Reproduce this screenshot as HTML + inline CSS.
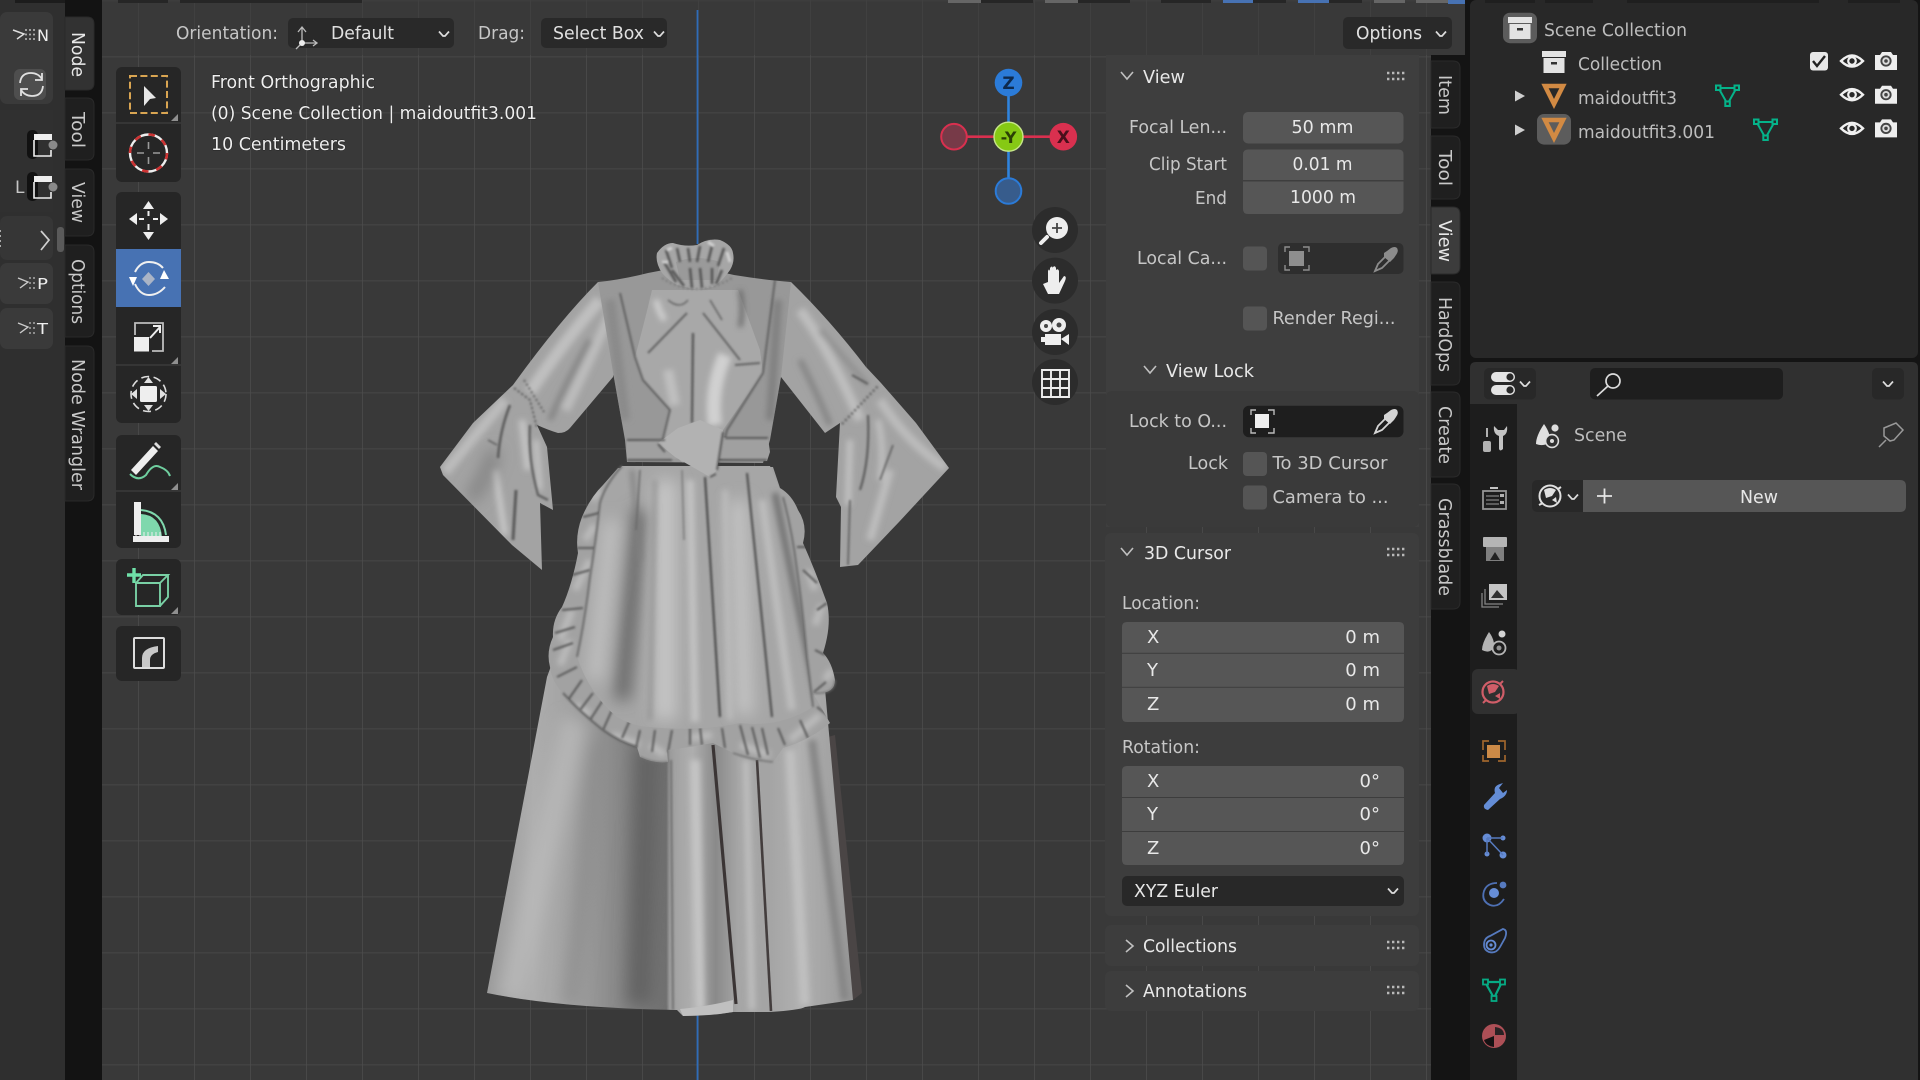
<!DOCTYPE html>
<html><head><meta charset="utf-8"><title>Blender</title>
<style>html,body{margin:0;padding:0;background:#141414;width:1920px;height:1080px;overflow:hidden}
svg{display:block;filter:blur(.35px)}
text{font-family:"DejaVu Sans","Liberation Sans",sans-serif;font-size:18px;fill:#c8c8c8}
.w{fill:#e8e8e8}.l{fill:#c6c6c6}.v{fill:#e0e0e0}.t{fill:#c9c9c9}.o{fill:#bdbdbd}.a{fill:#efefef}
</style></head><body>
<svg xmlns="http://www.w3.org/2000/svg" width="1920" height="1080" viewBox="0 0 1920 1080">
<defs>
<pattern id="grid" x="138" y="56.5" width="56" height="56" patternUnits="userSpaceOnUse"><path d="M0 0V56M0 0H56" stroke="#4c4c4c" stroke-width="1.6" fill="none"/></pattern>
<filter id="b1" filterUnits="userSpaceOnUse" x="420" y="220" width="560" height="810"><feGaussianBlur stdDeviation="1"/></filter>
<filter id="b3" filterUnits="userSpaceOnUse" x="420" y="220" width="560" height="810"><feGaussianBlur stdDeviation="3"/></filter>
<filter id="b6" filterUnits="userSpaceOnUse" x="420" y="220" width="560" height="810"><feGaussianBlur stdDeviation="8"/></filter>
<linearGradient id="sk" gradientUnits="userSpaceOnUse" x1="480" y1="0" x2="860" y2="0">
<stop offset="0" stop-color="#979797"/><stop offset=".14" stop-color="#adadad"/><stop offset=".24" stop-color="#a2a2a2"/><stop offset=".4" stop-color="#808080"/><stop offset=".49" stop-color="#707070"/><stop offset=".5" stop-color="#a0a0a0"/><stop offset=".56" stop-color="#aeaeae"/><stop offset=".62" stop-color="#8a8a8a"/><stop offset=".68" stop-color="#a6a6a6"/><stop offset=".76" stop-color="#a4a4a4"/><stop offset=".84" stop-color="#b0b0b0"/><stop offset=".94" stop-color="#a0a0a0"/><stop offset="1" stop-color="#8f8f8f"/></linearGradient>
<clipPath id="cS"><path d="M590 560L547 677L487 993Q560 1008 677 1010L683 1016Q710 1016 733 1012L770 1012Q800 1010 805 1007L853 1000L817 600Z"/></clipPath>
<clipPath id="cA"><path d="M622 466Q605 485 600 503Q596 540 590 577Q585 620 577 657Q590 695 617 717Q635 727 650 727Q700 732 740 723Q780 728 813 707Q810 680 807 657Q803 610 797 570Q792 530 783 497L770 466Z"/></clipPath>
<clipPath id="cU"><path d="M618 468L603 485Q590 498 582 517Q575 535 578 553Q572 585 562 607Q552 620 553 637Q546 652 550 667Q552 682 563 693Q580 712 603 730Q620 742 637 747L640 757Q655 764 668 762L667 750L690 747L713 743L733 753Q752 760 773 762L783 748Q810 740 830 723L813 693Q835 695 835 680Q832 662 823 653Q832 625 827 603Q815 570 803 543Q808 525 798 510Q792 495 780 488L773 467Z"/></clipPath>
<clipPath id="cT"><path d="M648 273Q620 280 598 282L614 378L625 440L627 462L763 463L770 440L781 377L791 282Q765 280 734 275L690 265Z"/></clipPath>
<clipPath id="cL"><path d="M598 282Q560 320 513 385L473 423L440 467L443 475L512 545L542 570L540 503L553 510L547 447L537 425Q548 430 558 433Q566 433 570 428L613 377L625 320Z"/></clipPath>
<clipPath id="cR"><path d="M791 282Q830 320 866 367L881 383L916 423L949 468L899 522L858 565L840 567L841 507L836 497L840 423L825 433L781 377L770 320Z"/></clipPath>
<g id="eye"><path d="M-11 0Q0-11 11 0Q0 11-11 0Z" fill="none" stroke="#f0f0f0" stroke-width="2.4"/><circle r="3.8" fill="none" stroke="#f0f0f0" stroke-width="2.2"/></g>
<g id="cam"><path d="M-11-6H-6L-4-9H5L7-6H11V9H-11Z" fill="#eee"/><circle r="5.6" fill="#444"/><circle r="3.7" fill="#ddd"/><circle r="1.8" fill="#444"/></g>
<g id="mg"><path d="M-9-7H9L0 9Z" fill="none" stroke="#05b38a" stroke-width="2"/><g fill="#282828" stroke="#05b38a" stroke-width="2"><rect x="-11.5" y="-9.5" width="4.5" height="4.5"/><rect x="7" y="-9.5" width="4.5" height="4.5"/><rect x="-2.2" y="6.5" width="4.5" height="4.5"/></g></g>
<g id="mo"><path d="M-9-9H9L0 9Z" fill="none" stroke="#d28a43" stroke-width="4.5" stroke-linejoin="miter"/></g>
<g id="col"><rect x="-12" y="-11" width="24" height="6" fill="#e3e3e3"/><rect x="-10.5" y="-4" width="21" height="15" fill="#e3e3e3"/><rect x="-3" y="0" width="6" height="2.5" fill="#333"/></g>
<g id="drop"><path d="M-5-3.5L-1 1H1L5-3.5" fill="none" stroke="#dcdcdc" stroke-width="1.7" transform="translate(0,1)"/></g>
<g id="dots"><path d="M0 0H20M0 6H20" stroke="#b8b8b8" stroke-width="2.4" stroke-dasharray="2.4 2.6"/></g>
<g id="pick"><path d="M-11 12L-8 5L0-3L4 1L-4 9Z" fill="none" stroke="currentColor" stroke-width="1.8"/><path d="M-2-6L1-8L5-11Q9-13 11-11Q13-8 10-4L8-1L4 3L-2-2Z" fill="currentColor"/></g>
</defs>

<!-- base -->
<rect width="1920" height="1080" fill="#141414"/>
<!-- left area -->
<rect x="0" y="0" width="65" height="1080" fill="#2f2f2f"/>
<rect x="0" y="12" width="53" height="92" rx="7" fill="#3a3a3a"/>
<rect x="0" y="110" width="53" height="102" fill="#303030"/>
<rect x="0" y="216" width="53" height="44" rx="7" fill="#363636"/>
<rect x="0" y="263" width="53" height="41" rx="7" fill="#3a3a3a"/>
<rect x="0" y="308" width="53" height="41" rx="7" fill="#3a3a3a"/>
<rect x="14" y="69" width="32" height="31" rx="6" fill="#4e4e4e"/>
<rect x="15" y="0" width="85" height="3" fill="#1c1c1c"/>
<rect x="57" y="227" width="7" height="25" rx="3" fill="#5a5a5a"/>
<rect x="65" y="0" width="37" height="1080" fill="#131313"/>
<path d="M13 30L24 34L17 39" fill="none" stroke="#ddd" stroke-width="1.5"/><path d="M25 30H37M25 34.500H37M25 39H37" stroke="#aaa" stroke-width="1.800" stroke-dasharray="2 2"/>
<text x="37" y="41" textLength="12" class="a" style="font-size:16px">N</text>
<path d="M20 83Q21 73 31 73Q38 73 42 79M42 73V80H35M43 86Q42 96 32 96Q25 96 21 90M21 96V89H28" fill="none" stroke="#e0e0e0" stroke-width="1.8"/>
<rect x="27" y="130" width="11" height="29" rx="5" fill="#111"/><path d="M34 134H52V140H34Z" fill="#eee"/><path d="M34 140V156H51V150" fill="none" stroke="#eee" stroke-width="1.6"/><circle cx="53" cy="145" r="4.5" fill="#8a8a8a"/>
<rect x="27" y="172" width="11" height="29" rx="5" fill="#111"/><path d="M34 176H52V182H34Z" fill="#eee"/><path d="M34 182V198H51V192" fill="none" stroke="#eee" stroke-width="1.6"/><circle cx="53" cy="187" r="4.5" fill="#8a8a8a"/>
<text x="15" y="193" style="font-size:17px" class="l">L</text>
<path d="M41 231L49 240L41 250" fill="none" stroke="#d0d0d0" stroke-width="1.7"/>
<path d="M0 230V250" stroke="#aaa" stroke-width="2" stroke-dasharray="2 3"/>
<path d="M18 278L28 282L20 288" fill="none" stroke="#ccc" stroke-width="1.4"/><path d="M29 278H37M29 283H37M29 288H37" stroke="#999" stroke-width="1.800" stroke-dasharray="2 2"/>
<text x="37" y="289" textLength="11" class="a" style="font-size:15px">P</text>
<path d="M18 323L28 327L20 333" fill="none" stroke="#ccc" stroke-width="1.4"/><path d="M29 323H37M29 328H37M29 333H37" stroke="#999" stroke-width="1.800" stroke-dasharray="2 2"/>
<text x="37" y="334" textLength="11" class="a" style="font-size:15px">T</text>
<!-- left tabs -->
<g stroke="#2a2a2a" stroke-width="1">
<path d="M65 17H87Q94 17 94 24V83Q94 90 87 90H65Z" fill="#323232"/>
<path d="M65 98H87Q94 98 94 105V153Q94 160 87 160H65Z" fill="#1f1f1f"/>
<path d="M65 169H87Q94 169 94 176V229Q94 236 87 236H65Z" fill="#1f1f1f"/>
<path d="M65 245H87Q94 245 94 252V330Q94 337 87 337H65Z" fill="#1f1f1f"/>
<path d="M65 346H87Q94 346 94 353V494Q94 501 87 501H65Z" fill="#1f1f1f"/>
</g>
<text transform="translate(72,32) rotate(90)" textLength="45" class="w">Node</text>
<text transform="translate(72,112) rotate(90)" textLength="36" class="t">Tool</text>
<text transform="translate(72,182) rotate(90)" textLength="41" class="t">View</text>
<text transform="translate(72,259) rotate(90)" textLength="65" class="t">Options</text>
<text transform="translate(72,359) rotate(90)" textLength="131" class="t">Node Wrangler</text>

<!-- viewport -->
<rect x="102" y="0" width="1329" height="1080" fill="#393939"/>
<rect x="1431" y="0" width="34" height="55" fill="#393939"/>
<rect x="102" y="0" width="1329" height="1080" fill="url(#grid)"/>
<rect x="102" y="0" width="1363" height="55" fill="#3b3b3b" opacity=".6"/>
<path d="M697.500 10V244M697.500 1014V1080" stroke="#2f6cb8" stroke-width="1.800"/>
<g fill="#262626">
<rect x="118" y="0" width="50" height="3"/><rect x="180" y="0" width="182" height="3"/>
<rect x="948" y="0" width="85" height="3"/><rect x="1045" y="0" width="85" height="3"/><rect x="1161" y="0" width="50" height="3"/><rect x="1223" y="0" width="63" height="3"/><rect x="1298" y="0" width="64" height="3"/><rect x="1374" y="0" width="31" height="3" fill="#666"/><rect x="1416" y="0" width="34" height="3" fill="#666"/>
</g>
<g fill="#666"><rect x="948" y="0" width="33" height="3"/><rect x="1045" y="0" width="33" height="3"/></g>
<g fill="#4772b3"><rect x="1223" y="0" width="30" height="3"/><rect x="1298" y="0" width="31" height="3"/><rect x="1448" y="0" width="17" height="4"/></g>

<!-- dress -->
<g>
<!-- back panel + skirt -->
<path d="M817 740L835 735L862 993L853 1000Z" fill="#4a4545"/>
<path d="M590 560L547 677L487 993Q560 1008 677 1010L683 1016Q710 1016 733 1012L770 1012Q800 1010 805 1007L853 1000L817 600Z" fill="url(#sk)"/>
<g clip-path="url(#cS)">
<g filter="url(#b6)">
<path d="M575 720L510 1000" stroke="#bdbdbd" stroke-width="26" opacity=".7"/>
<path d="M648 745L640 1005" stroke="#636363" stroke-width="26"/>
<path d="M600 740L570 1005" stroke="#8c8c8c" stroke-width="12"/>
</g>
<g filter="url(#b3)">
<path d="M695 760L700 1010" stroke="#c4c4c4" stroke-width="10"/>
<path d="M746 760L752 1010" stroke="#bdbdbd" stroke-width="7"/>
<path d="M790 750L805 1005" stroke="#c0c0c0" stroke-width="10"/>
<path d="M812 740L845 1000" stroke="#858585" stroke-width="8"/>
</g>
<g filter="url(#b1)">
<path d="M671 760L673 1010" stroke="#6e6e6e" stroke-width="2"/>
</g>
<path d="M713 745L736 1004" stroke="#3b3535" stroke-width="3.200"/>
<path d="M757 760L771 1011" stroke="#433d3d" stroke-width="2.600"/>
<path d="M680 1009Q710 1006 733 1000L733 1014L683 1016Z" fill="#c0c0c0"/>
</g>
<!-- ruffle -->
<path d="M618 468L603 485Q590 498 582 517Q575 535 578 553Q572 585 562 607Q552 620 553 637Q546 652 550 667Q552 682 563 693Q580 712 603 730Q620 742 637 747L640 757Q655 764 668 762L667 750L690 747L713 743L733 753Q752 760 773 762L783 748Q810 740 830 723L813 693Q835 695 835 680Q832 662 823 653Q832 625 827 603Q815 570 803 543Q808 525 798 510Q792 495 780 488L773 467Z" fill="#a2a2a2"/>
<g clip-path="url(#cU)">
<g filter="url(#b3)" stroke="#bcbcbc" stroke-width="7" fill="none">
<path d="M592 500L600 490M585 540L595 525M575 590L590 560M560 640L572 610M560 665L570 640M575 705L590 715M612 735L640 745M650 745L665 755M690 738L712 735M740 745L770 755M790 740L820 715M825 680L832 670M815 625L822 605M808 570L815 590"/>
</g>
<g filter="url(#b1)" stroke="#585858" stroke-width="2" fill="none">
<path d="M583 517L603 512M577 548L595 548M572 575L590 570M562 610L583 608M555 633L575 627M553 650L573 643M557 677L577 667M568 700L582 680M580 710L593 693M590 720L603 700M603 730L612 710M622 738L630 720"/>
<path d="M797 547L813 547M803 570L817 583M817 610L827 603M815 650L825 655M814 692L826 682M817 707L830 717"/>
<path d="M640 730L636 748M655 730L652 752M672 730L668 752M690 728L690 745M700 727L702 745M722 728L725 748M740 725L748 755M752 727L760 758M762 728L768 755M778 728L785 745M800 720L808 738"/>
</g>
</g>
<g filter="url(#b1)"><path d="M563 693Q580 712 603 730Q620 742 637 747" stroke="#5e5e5e" stroke-width="2" fill="none"/><path d="M640 757Q655 764 668 762M733 753Q752 760 773 762M813 693Q835 695 835 680" stroke="#707070" stroke-width="1.500" fill="none"/></g>
<!-- apron -->
<path d="M622 466Q605 485 600 503Q596 540 590 577Q585 620 577 657Q590 695 617 717Q635 727 650 727Q700 732 740 723Q780 728 813 707Q810 680 807 657Q803 610 797 570Q792 530 783 497L770 466Z" fill="#a6a6a6"/>
<g clip-path="url(#cA)">
<g filter="url(#b6)">
<path d="M640 510L622 700" stroke="#5f5f5f" stroke-width="14"/>
<path d="M665 480L665 720" stroke="#c6c6c6" stroke-width="22"/>
<path d="M612 520L595 680" stroke="#c0c0c0" stroke-width="16"/>
<path d="M738 500L745 715" stroke="#c6c6c6" stroke-width="16"/>
</g>
<g filter="url(#b3)">
<path d="M632 470L640 560" stroke="#808080" stroke-width="4"/>
<path d="M655 480L650 720" stroke="#8a8a8a" stroke-width="3"/>
<path d="M690 480L695 722" stroke="#c2c2c2" stroke-width="8"/>
<path d="M775 493L817 700" stroke="#707070" stroke-width="6"/>
<path d="M762 500L792 710" stroke="#bdbdbd" stroke-width="8"/>
<path d="M725 490L730 720" stroke="#bcbcbc" stroke-width="6"/>
</g>
<g filter="url(#b1)">
<path d="M705 477L720 717" stroke="#484848" stroke-width="2.200"/>
<path d="M747 473L772 717" stroke="#4f4f4f" stroke-width="2.200"/>
<path d="M640 470L636 530" stroke="#666" stroke-width="1.500"/>
<path d="M682 470L684 540" stroke="#7a7a7a" stroke-width="1.500"/>
</g>
</g>
<g filter="url(#b1)"><path d="M622 466Q605 485 600 503Q596 540 590 577Q585 620 577 657M813 707Q810 680 807 657Q803 610 797 570Q792 530 783 497" fill="none" stroke="#666" stroke-width="1.800"/></g>
<!-- left sleeve -->
<path d="M598 282Q560 320 513 385L473 423L440 467L443 475L512 545L542 570L540 503L553 510L547 447L537 425Q548 430 558 433Q566 433 570 428L613 377L625 320Z" fill="#a3a3a3"/>
<g clip-path="url(#cL)">
<g filter="url(#b3)" fill="none">
<path d="M600 300Q565 340 530 392" stroke="#bfbfbf" stroke-width="12"/>
<path d="M612 310Q590 360 565 410" stroke="#bcbcbc" stroke-width="10"/>
<path d="M590 340Q565 385 550 420" stroke="#868686" stroke-width="6"/>
<path d="M505 400Q480 430 445 472" stroke="#bcbcbc" stroke-width="10"/>
<path d="M495 470L505 535" stroke="#c8c8c8" stroke-width="6"/>
<path d="M522 420L528 470" stroke="#c4c4c4" stroke-width="7"/>
<path d="M536 440L540 490" stroke="#c6c6c6" stroke-width="5"/>
</g>
<g filter="url(#b6)" fill="none"><path d="M495 450Q485 480 470 500" stroke="#787878" stroke-width="10"/></g>
<g filter="url(#b1)" fill="none" stroke="#5a5a5a">
<path d="M514 388L530 400L537 428" stroke-width="1.800" stroke-dasharray="2.500 2"/>
<path d="M524 380L544 412" stroke-width="2" stroke-dasharray="2 2.500"/>
<path d="M510 405Q500 430 498 458" stroke-width="2.500"/>
<path d="M530 425Q528 460 538 495L548 500" stroke-width="2.200"/>
<path d="M516 490L513 540" stroke-width="3"/>
<path d="M488 440L497 445" stroke-width="1.500"/>
</g>
</g>
<!-- right sleeve -->
<path d="M791 282Q830 320 866 367L881 383L916 423L949 468L899 522L858 565L840 567L841 507L836 497L840 423L825 433L781 377L770 320Z" fill="#a3a3a3"/>
<g clip-path="url(#cR)">
<g filter="url(#b3)" fill="none">
<path d="M800 310Q830 350 860 420" stroke="#bebebe" stroke-width="10"/>
<path d="M800 360Q820 400 830 425" stroke="#868686" stroke-width="6"/>
<path d="M820 330Q850 365 868 385" stroke="#8f8f8f" stroke-width="5"/>
<path d="M880 400Q905 440 945 468" stroke="#bcbcbc" stroke-width="9"/>
<path d="M890 470L870 540" stroke="#bebebe" stroke-width="8"/>
<path d="M850 440L848 505" stroke="#c2c2c2" stroke-width="6"/>
<path d="M878 420Q885 450 880 480" stroke="#c0c0c0" stroke-width="6"/>
</g>
<g filter="url(#b1)" fill="none" stroke="#5c5c5c">
<path d="M842 424L878 386" stroke-width="2.500" stroke-dasharray="2 2.500"/>
<path d="M852 375L868 384" stroke-width="2"/>
<path d="M868 415Q870 460 860 490" stroke-width="2.200"/>
<path d="M850 500L848 565" stroke-width="1.600"/>
<path d="M893 445L880 480" stroke-width="1.600"/>
</g>
</g>
<!-- torso -->
<path d="M648 273Q620 280 598 282L614 378L625 440L627 462L763 463L770 440L781 377L791 282Q765 280 734 275L690 265Z" fill="#989898"/>
<g clip-path="url(#cT)">
<path d="M652 290Q645 320 635 357L643 380L670 410L662 443L690 470L723 430L763 373L760 350L738 290Z" fill="#a8a8a8"/>
<g filter="url(#b3)" fill="none">
<path d="M656 300Q660 315 665 320" stroke="#d0d0d0" stroke-width="6"/>
<path d="M725 355Q710 390 715 425" stroke="#d0d0d0" stroke-width="14"/>
<path d="M668 370L675 405" stroke="#c0c0c0" stroke-width="10"/>
<path d="M740 290Q744 310 740 327" stroke="#666" stroke-width="4"/>
<path d="M610 300L625 420" stroke="#8a8a8a" stroke-width="10"/>
<path d="M778 300L770 420" stroke="#808080" stroke-width="8"/>
</g>
<g filter="url(#b1)" fill="none" stroke="#585858" stroke-width="1.700">
<path d="M620 293L635 357L643 380L670 410L662 443"/>
<path d="M775 280L763 373L727 430L720 460"/>
<path d="M693 333L692 423" stroke-width="2.400"/>
<path d="M648 353L687 313"/>
<path d="M703 313L740 360"/>
<path d="M735 365L760 363"/>
<path d="M668 300Q680 310 688 300M710 300L722 320" stroke-width="1.300"/>
</g>
</g>
<!-- belt -->
<path d="M627 441L690 437L768 438L770 452L767 461L706 458L627 460Z" fill="#a0a0a0"/>
<path d="M658 443L675 457L710 477L717 470L723 430L700 420L678 428Z" fill="#b2b2b2"/>
<g filter="url(#b1)" fill="none" stroke="#4f4f4f" stroke-width="1.800"><path d="M627 440H665M725 438H768M627 460H672M720 460H767"/><path d="M717 470L723 432M710 477L716 474"/><path d="M658 444L665 452"/></g>
<!-- collar -->
<path d="M657 253Q664 243 673 243Q685 247 697 245Q708 238 720 240Q732 245 733 253Q735 262 730 270Q722 282 713 287L697 290L677 285Q668 280 662 273Q655 262 657 253Z" fill="#a6a6a6"/>
<path d="M676 262Q696 254 720 262L716 280L680 280Z" fill="#9a9a9a"/>
<g filter="url(#b1)" fill="none" stroke="#555">
<path d="M666 250L672 268M677 248L680 262M688 248L690 262M700 246L697 262M712 246L708 262M724 248L718 266M664 262L676 282M672 270L684 286M690 268L692 288M700 268L702 288M712 268L712 284M722 270L716 284" stroke-width="2.600"/>
</g>
<path d="M662 278Q695 300 732 278" fill="none" stroke="#747474" stroke-width="1.800" stroke-dasharray="2 2.500" filter="url(#b1)"/>
<path d="M667 250L672 248M708 242L714 246M727 252L730 262M662 262L668 262" stroke="#d2d2d2" stroke-width="3" filter="url(#b1)"/>
</g>

<!-- toolbar -->
<g fill="#262626">
<rect x="116" y="67" width="65" height="115" rx="6"/>
<rect x="116" y="192" width="65" height="231" rx="6"/>
<rect x="116" y="435" width="65" height="113" rx="6"/>
<rect x="116" y="559" width="65" height="56" rx="6"/>
<rect x="116" y="626" width="65" height="55" rx="6"/>
</g>
<path d="M116 123H181M116 365H181M116 491H181" stroke="#3a3a3a" stroke-width="1.500"/>
<rect x="116" y="249" width="65" height="58" fill="#4772b3"/>
<rect x="130" y="76" width="37" height="37" fill="none" stroke="#d9a552" stroke-width="2" stroke-dasharray="7 3.400"/>
<path d="M144 86L156 98L150 99L144 106Z" fill="#e6e6e6"/>
<g fill="#8f8f8f"><path d="M171 121H178V114Z"/><path d="M171 364H178V357Z"/><path d="M171 490H178V483Z"/><path d="M171 614H178V607Z"/></g>
<circle cx="148.500" cy="153" r="18.500" fill="none" stroke="#eee" stroke-width="2.400"/>
<circle cx="148.500" cy="153" r="18.500" fill="none" stroke="#c33" stroke-width="2.600" stroke-dasharray="6.500 8"/>
<path d="M148.500 142V149M148.500 157V164M137 153H144M153 153H160" stroke="#9a9a9a" stroke-width="1.600"/>
<g fill="#eee"><path d="M148.500 201L154 209H143Z"/><path d="M148.500 240L154 232H143Z"/><path d="M129 219L137 213V225Z"/><path d="M168 219L160 213V225Z"/></g>
<path d="M148.500 211V216M148.500 224V230M139 219H144M153 219H158" stroke="#eee" stroke-width="2"/>
<path d="M135 272Q140 262 149 262Q158 262 163 268M135 284Q140 295 149 295Q158 295 165 287" fill="none" stroke="#f0f0f0" stroke-width="2"/>
<path d="M133 286L129 277H137Z" fill="#fff"/><path d="M164 270L160 279H169Z" fill="#fff"/>
<path d="M148.500 272L155 279L148.500 286L142 279Z" fill="#aab4c6"/>
<rect x="134" y="337" width="15" height="14.500" fill="#eee"/>
<path d="M135 335V323H163V351H152" fill="none" stroke="#bdbdbd" stroke-width="1.800"/>
<path d="M150 338L160 327M153 326H160V333" fill="none" stroke="#eee" stroke-width="2"/>
<rect x="140" y="386" width="17" height="16" rx="1.500" fill="#eee"/>
<path d="M148.500 377L153 383H144ZM148.500 411L153 405H144ZM131 394L137 389V399ZM166 394L160 389V399Z" fill="#e0e0e0"/>
<circle cx="148.500" cy="394" r="17.500" fill="none" stroke="#ddd" stroke-width="1.600" stroke-dasharray="8 4.500"/>
<path d="M131 470L153 446L158 451L136 475Z" fill="#eee"/><path d="M154 444L156 442L161 447L159 449Z" fill="#ddd"/>
<path d="M130 474Q138 482 146 475Q153 463 160 467Q168 470 170 476" fill="none" stroke="#6fcf9f" stroke-width="2"/>
<path d="M134 502H141L141 535H134Z" fill="#eee"/>
<path d="M141 514Q160 515 162 537H141Z" fill="#7fd8ad"/>
<path d="M141 510Q163 512 166 535" fill="none" stroke="#7fd8ad" stroke-width="2"/>
<rect x="133" y="536" width="36" height="6" fill="#eee"/>
<path d="M136 536V532M140 536V532M144 536V532M148 536V532M152 536V532M156 536V532M160 536V532" stroke="#eee" stroke-width="1"/>
<path d="M136 583H160V606H136ZM136 583L143 575H168L160 583M168 575V597L160 606" fill="none" stroke="#79d0a5" stroke-width="1.900"/>
<path d="M127 575H141M134 568V583" stroke="#6fe0a8" stroke-width="3.400"/>
<rect x="134" y="638" width="30" height="30" rx="1" fill="none" stroke="#ddd" stroke-width="2"/>
<path d="M142 667V658Q142 648 158 646V652Q150 654 150 660V667Z" fill="#c8c8c8"/>

<!-- text overlay -->
<text x="176" y="39" textLength="102" class="l">Orientation:</text>
<rect x="288" y="18" width="166" height="30" rx="5" fill="#292929"/>
<path d="M302 40V28M298 32L302 27L306 32M302 43L296 49M302 43H316M313 40L317 43L313 46" fill="none" stroke="#bbb" stroke-width="1.300"/><circle cx="302" cy="43" r="3" fill="#eee"/>
<text x="331" y="39" textLength="63" class="v">Default</text>
<use href="#drop" x="444" y="34"/>
<text x="478" y="39" textLength="47" class="l">Drag:</text>
<rect x="541" y="18" width="126" height="30" rx="5" fill="#292929"/>
<text x="553" y="39" textLength="91" class="v">Select Box</text>
<use href="#drop" x="659" y="34"/>
<rect x="1343" y="17" width="109" height="32" rx="5" fill="#292929"/>
<text x="1356" y="39" textLength="66" class="v">Options</text>
<use href="#drop" x="1441" y="34"/>
<g style="paint-order:stroke" stroke="#1c1c1c" stroke-width=".7">
<text x="211" y="88" textLength="164" class="a">Front Orthographic</text>
<text x="211" y="119" textLength="326" class="a">(0) Scene Collection | maidoutfit3.001</text>
<text x="211" y="150" textLength="135" class="a">10 Centimeters</text>
</g>

<!-- gizmo -->
<path d="M1008.500 82V191" stroke="#2f84de" stroke-width="2.600"/>
<path d="M954 136.700H1063" stroke="#d9304f" stroke-width="2.600"/>
<circle cx="1008.500" cy="82.600" r="13.800" fill="#2b7bd8"/><text x="1008.500" y="89" text-anchor="middle" style="font-size:17px;fill:#0e2a4d" font-weight="bold">Z</text>
<circle cx="954" cy="136.700" r="12.800" fill="#773a48" stroke="#d9304f" stroke-width="2"/>
<circle cx="1063.300" cy="136.700" r="13.800" fill="#d9304f"/><text x="1063.300" y="143" text-anchor="middle" style="font-size:17px;fill:#4a0f1b" font-weight="bold">X</text>
<circle cx="1008.500" cy="191" r="12.800" fill="#375c8c" stroke="#2b7bd8" stroke-width="2"/>
<circle cx="1008.500" cy="136.700" r="14.500" fill="#86c914" stroke="#c7e68a" stroke-width="1.400"/><text x="1008.500" y="143" text-anchor="middle" style="font-size:16px;fill:#2b4005" font-weight="bold">-Y</text>
<g fill="#2c2c2c"><circle cx="1055" cy="230" r="23"/><circle cx="1055" cy="280.600" r="23"/><circle cx="1055" cy="332" r="23"/><circle cx="1055" cy="382" r="23"/></g>
<circle cx="1057" cy="228" r="11" fill="#eee"/><path d="M1047 237L1041 243" stroke="#eee" stroke-width="4" stroke-linecap="round"/><path d="M1057 223V233M1052 228H1062" stroke="#444" stroke-width="1.800"/>
<path d="M1043 284L1048 282V271Q1049 268 1050 271V279V268Q1052 265 1053 268V278V267Q1055 265 1056 268V279V270Q1058 268 1059 271V283L1064 276Q1067 276 1065 281L1059 294H1048Z" fill="#eee"/>
<circle cx="1046" cy="326" r="6" fill="#eee"/><circle cx="1059" cy="325" r="7" fill="#eee"/><circle cx="1046" cy="326" r="2" fill="#444"/><circle cx="1059" cy="325" r="2.500" fill="#444"/><rect x="1045" y="334" width="16" height="11" fill="#eee"/><path d="M1061 339L1069 334V345Z" fill="#eee"/><rect x="1041" y="337" width="5" height="5" fill="#eee"/>
<path d="M1042 370H1069V397H1042ZM1051 370V397M1060 370V397M1042 379H1069M1042 388H1069" fill="none" stroke="#eee" stroke-width="1.900"/>

<!-- right sidebar panels -->
<path d="M1106 55H1419V527H1106Z" fill="#3e3e3e"/>
<rect x="1106" y="391" width="313" height="136" rx="6" fill="#3a3a3a"/>
<rect x="1105" y="533" width="314" height="383" rx="6" fill="#3d3d3d"/>
<rect x="1105" y="925" width="314" height="41" rx="6" fill="#3d3d3d"/>
<rect x="1105" y="971" width="314" height="40" rx="6" fill="#3d3d3d"/>

<path d="M1121 72L1127 79L1133 72" fill="none" stroke="#c0c0c0" stroke-width="1.600"/>
<text x="1143" y="83" textLength="42" class="w">View</text>
<use href="#dots" x="1387" y="73"/>
<text x="1129" y="133" textLength="98" class="l">Focal Len...</text>
<rect x="1243" y="112" width="160.500" height="31.500" rx="5" fill="#565656"/>
<text x="1322.500" y="133" text-anchor="middle" textLength="62" class="w">50 mm</text>
<text x="1149" y="170" textLength="78" class="l">Clip Start</text>
<path d="M1248 149.500H1398.500Q1403.500 149.500 1403.500 154.500V180H1243V154.500Q1243 149.500 1248 149.500Z" fill="#565656"/>
<text x="1322.500" y="170" text-anchor="middle" textLength="60" class="w">0.01 m</text>
<text x="1195" y="204" textLength="32" class="l">End</text>
<path d="M1243 181.500H1403.500V209Q1403.500 214 1398.500 214H1248Q1243 214 1243 209Z" fill="#565656"/>
<text x="1323" y="203" text-anchor="middle" textLength="66" class="w">1000 m</text>
<text x="1137" y="264" textLength="90" class="l">Local Ca...</text>
<rect x="1243" y="246.500" width="24" height="24" rx="4" fill="#555"/>
<rect x="1278" y="243" width="125.500" height="31" rx="5" fill="#2e2e2e"/>
<rect x="1289" y="251" width="15" height="15" fill="#8e8e8e"/>
<path d="M1285 252V247H1290M1303 247H1309V252M1309 265V270H1303M1290 270H1285V265" fill="none" stroke="#8e8e8e" stroke-width="1.400"/>
<use href="#pick" x="1386" y="259" style="color:#8c8c8c"/>
<rect x="1243" y="306.500" width="24" height="24" rx="4" fill="#555"/>
<text x="1272.500" y="324" textLength="123" class="l">Render Regi...</text>
<path d="M1144 366L1150 373L1156 366" fill="none" stroke="#c0c0c0" stroke-width="1.600"/>
<text x="1166" y="377" textLength="88" class="w">View Lock</text>
<text x="1129" y="427" textLength="98" class="l">Lock to O...</text>
<rect x="1243" y="405.700" width="160.500" height="31.500" rx="6" fill="#1e1e1e"/>
<rect x="1255" y="414" width="14" height="14" fill="#eee"/>
<path d="M1251 415V410H1256M1268 410H1274V415M1274 428V433H1268M1256 433H1251V428" fill="none" stroke="#bbb" stroke-width="1.400"/>
<use href="#pick" x="1386" y="421" style="color:#d5d5d5"/>
<text x="1188" y="469" textLength="40" class="l">Lock</text>
<rect x="1243" y="452" width="24" height="24" rx="4" fill="#555"/>
<text x="1272.500" y="469" textLength="115" class="l">To 3D Cursor</text>
<rect x="1243" y="485.500" width="24" height="24" rx="4" fill="#555"/>
<text x="1272.500" y="503" textLength="116" class="l">Camera to ...</text>

<path d="M1121 548L1127 555L1133 548" fill="none" stroke="#c0c0c0" stroke-width="1.600"/>
<text x="1144" y="559" textLength="87" class="w">3D Cursor</text>
<use href="#dots" x="1387" y="549"/>
<text x="1122" y="609" textLength="78" class="l">Location:</text>
<path d="M1127 622H1399Q1404 622 1404 627V652.800H1122V627Q1122 622 1127 622Z" fill="#565656"/>
<rect x="1122" y="653.800" width="282" height="33" fill="#565656"/>
<path d="M1122 687.800H1404V717Q1404 722 1399 722H1127Q1122 722 1122 717Z" fill="#565656"/>
<text x="1147" y="643" class="w">X</text><text x="1147" y="676" class="w">Y</text><text x="1147" y="710" class="w">Z</text>
<text x="1380" y="643" text-anchor="end" class="w">0 m</text><text x="1380" y="676" text-anchor="end" class="w">0 m</text><text x="1380" y="710" text-anchor="end" class="w">0 m</text>
<text x="1122" y="753" textLength="78" class="l">Rotation:</text>
<path d="M1127 766H1399Q1404 766 1404 771V797H1122V771Q1122 766 1127 766Z" fill="#565656"/>
<rect x="1122" y="798" width="282" height="33" fill="#565656"/>
<path d="M1122 832H1404V860Q1404 865 1399 865H1127Q1122 865 1122 860Z" fill="#565656"/>
<text x="1147" y="787" class="w">X</text><text x="1147" y="820" class="w">Y</text><text x="1147" y="854" class="w">Z</text>
<text x="1380" y="787" text-anchor="end" class="w">0°</text><text x="1380" y="820" text-anchor="end" class="w">0°</text><text x="1380" y="854" text-anchor="end" class="w">0°</text>
<rect x="1122" y="876" width="282" height="30" rx="5" fill="#282828"/>
<text x="1134" y="897" textLength="84" class="w">XYZ Euler</text>
<use href="#drop" x="1393" y="891"/>
<path d="M1126 940L1133 946L1126 952" fill="none" stroke="#c0c0c0" stroke-width="1.600"/>
<text x="1143" y="952" textLength="94" class="w">Collections</text>
<use href="#dots" x="1387" y="942"/>
<path d="M1126 985L1133 991L1126 997" fill="none" stroke="#c0c0c0" stroke-width="1.600"/>
<text x="1143" y="997" textLength="104" class="w">Annotations</text>
<use href="#dots" x="1387" y="987"/>

<!-- right tabs -->
<rect x="1431" y="55" width="39" height="1025" fill="#141414"/>
<rect x="1465" y="0" width="5" height="55" fill="#141414"/>
<g stroke="#2a2a2a" stroke-width="1">
<path d="M1431 61H1453Q1460 61 1460 68V121Q1460 128 1453 128H1431Z" fill="#1f1f1f"/>
<path d="M1431 136H1453Q1460 136 1460 143V192Q1460 199 1453 199H1431Z" fill="#1f1f1f"/>
<path d="M1431 207H1453Q1460 207 1460 214V267Q1460 274 1453 274H1431Z" fill="#3c3c3c"/>
<path d="M1431 282H1453Q1460 282 1460 289V378Q1460 385 1453 385H1431Z" fill="#1f1f1f"/>
<path d="M1431 392H1453Q1460 392 1460 399V470Q1460 477 1453 477H1431Z" fill="#1f1f1f"/>
<path d="M1431 484H1453Q1460 484 1460 491V602Q1460 609 1453 609H1431Z" fill="#1f1f1f"/>
</g>
<text transform="translate(1439,75) rotate(90)" textLength="40" class="t">Item</text>
<text transform="translate(1439,150) rotate(90)" textLength="36" class="t">Tool</text>
<text transform="translate(1439,220) rotate(90)" textLength="42" class="w">View</text>
<text transform="translate(1439,297) rotate(90)" textLength="75" class="t">HardOps</text>
<text transform="translate(1439,406) rotate(90)" textLength="58" class="t">Create</text>
<text transform="translate(1439,498) rotate(90)" textLength="98" class="t">Grassblade</text>

<!-- outliner -->
<rect x="1470" y="0" width="448" height="358" rx="6" fill="#282828"/>
<g fill="#1f1f1f"><rect x="1485" y="0" width="50" height="3"/><rect x="1545" y="0" width="48" height="3"/><rect x="1627" y="0" width="192" height="3"/><rect x="1848" y="0" width="52" height="3"/></g>
<rect x="1503" y="12.700" width="34" height="30.500" rx="7" fill="#5c5c5c"/>
<use href="#col" x="1520" y="28"/>
<text x="1544" y="36" textLength="143" class="o">Scene Collection</text>
<use href="#col" x="1554" y="62"/>
<text x="1578" y="70" textLength="84" class="o">Collection</text>
<rect x="1810" y="52" width="18" height="18.500" rx="3" fill="#e8e8e8"/>
<path d="M1813 61L1817 66L1825 56" fill="none" stroke="#222" stroke-width="2.400"/>
<use href="#eye" x="1852" y="61"/><use href="#cam" x="1886" y="61"/>
<path d="M1515 90.500L1525 96L1515 101.500Z" fill="#cfcfcf"/>
<use href="#mo" x="1554" y="95"/>
<text x="1578" y="104" textLength="99" class="o">maidoutfit3</text>
<use href="#mg" x="1727.500" y="95"/>
<use href="#eye" x="1852" y="94.700"/><use href="#cam" x="1886" y="94.700"/>
<path d="M1515 124.500L1525 130L1515 135.500Z" fill="#cfcfcf"/>
<rect x="1537" y="114" width="34" height="30.600" rx="7" fill="#5c5c5c"/>
<use href="#mo" x="1554" y="129"/>
<text x="1578" y="138" textLength="137" class="o">maidoutfit3.001</text>
<use href="#mg" x="1765.500" y="129"/>
<use href="#eye" x="1852" y="128.400"/><use href="#cam" x="1886" y="128.400"/>

<!-- properties -->
<path d="M1476 362H1912Q1918 362 1918 368V1080H1470V368Q1470 362 1476 362Z" fill="#303030"/>
<rect x="1470" y="404" width="47" height="676" fill="#1d1d1d"/>
<rect x="1472" y="669" width="48" height="45" rx="6" fill="#303030"/>
<rect x="1484" y="368" width="52" height="31.500" rx="5" fill="#282828"/>
<rect x="1491" y="372" width="24" height="10" rx="5" fill="#e3e3e3"/><rect x="1491" y="385" width="24" height="10" rx="5" fill="#e3e3e3"/><circle cx="1510" cy="377" r="3.600" fill="#282828"/><circle cx="1510" cy="390" r="3.600" fill="#282828"/>
<use href="#drop" x="1525" y="384"/>
<rect x="1590" y="368" width="193" height="31.500" rx="5" fill="#1e1e1e"/>
<circle cx="1613" cy="381" r="7" fill="none" stroke="#dcdcdc" stroke-width="1.700"/><path d="M1608 386L1597 396" stroke="#dcdcdc" stroke-width="1.700"/>
<rect x="1872" y="368" width="32" height="31.500" rx="5" fill="#282828"/>
<use href="#drop" x="1888" y="384"/>
<path d="M1536 444Q1536 436 1544 424Q1551 434 1550 442Q1544 447 1536 444Z" fill="#e0e0e0"/><circle cx="1555" cy="428" r="3.600" fill="#ddd"/><circle cx="1552" cy="441" r="6.400" fill="#303030" stroke="#ddd" stroke-width="1.600"/><circle cx="1552" cy="441" r="2" fill="#ddd"/>
<text x="1574" y="441" textLength="53" class="o">Scene</text>
<path d="M1879 447L1886 440M1884 428L1896 423L1903 430L1894 440L1890 441L1884 436Z" fill="none" stroke="#999" stroke-width="1.500"/>
<path d="M1538 480H1583V512H1538Q1532 512 1532 506V486Q1532 480 1538 480Z" fill="#282828"/>
<path d="M1583 480H1900Q1906 480 1906 486V506Q1906 512 1900 512H1583Z" fill="#565656"/>
<circle cx="1550" cy="496" r="10.500" fill="none" stroke="#e0e0e0" stroke-width="2"/><path d="M1544 490Q1550 486 1556 490L1552 496L1546 498ZM1552 500L1556 497L1557 503Z" fill="#e0e0e0"/><path d="M1539 505L1543 503M1561 487L1558 489" stroke="#e0e0e0" stroke-width="2"/>
<use href="#drop" x="1573" y="497"/>
<path d="M1597 496H1612M1604.500 488.500V503.500" stroke="#e6e6e6" stroke-width="1.800"/>
<text x="1740" y="503" textLength="38" class="w">New</text>

<!-- property icons -->
<g opacity=".95">
<path d="M1487 428V437" stroke="#bbb" stroke-width="2"/><rect x="1483" y="441" width="8" height="11" rx="2" fill="#bbb"/>
<path d="M1494 426Q1493 434 1499 436V449Q1500 452 1503 449V436Q1508 434 1507 426L1504 430H1498Z" fill="#ccc"/>
<rect x="1483" y="491" width="23" height="18" fill="none" stroke="#9c9c9c" stroke-width="1.800"/><path d="M1490 488H1498" stroke="#ccc" stroke-width="2"/><path d="M1486 496H1499M1486 500H1499M1486 504H1499" stroke="#888" stroke-width="1.300"/><rect x="1500" y="494" width="4" height="3" fill="#bbb"/><rect x="1500" y="501" width="4" height="3" fill="#bbb"/>
<rect x="1483" y="537" width="24" height="10" rx="1" fill="#bdbdbd"/><rect x="1486" y="547" width="18" height="14" fill="#858585"/><path d="M1490 560L1495 552L1500 560Z" fill="#222"/>
<path d="M1489 584H1507V600H1489Z" fill="#cfcfcf"/><path d="M1491 598L1497 590L1504 598Z" fill="#333"/><path d="M1485 589V604H1503M1482 593V607H1499" fill="none" stroke="#8a8a8a" stroke-width="1.300"/>
<path d="M1482 650Q1482 643 1489 632Q1495 640 1494 648Q1489 654 1482 650Z" fill="#bcbcbc"/><circle cx="1502" cy="634" r="3.500" fill="#ddd"/><circle cx="1499" cy="648" r="6.500" fill="#1d1d1d" stroke="#bdbdbd" stroke-width="1.800"/><circle cx="1499" cy="648" r="2.500" fill="#999"/>
<circle cx="1493" cy="692" r="10.500" fill="none" stroke="#d9606c" stroke-width="2.200"/><path d="M1487 686Q1493 682 1499 686L1495 692L1489 694ZM1495 696L1500 693L1500 699Z" fill="#d9606c"/><path d="M1483 703L1486 700M1503 681L1500 684" stroke="#d9606c" stroke-width="2"/>
<rect x="1487" y="745" width="13" height="13" fill="#d6904a"/><path d="M1483 750V741H1489M1498 741H1505V750M1505 755V761H1498M1489 761H1483V755" fill="none" stroke="#a66a2e" stroke-width="1.700"/>
<path d="M1484 805L1495 793Q1493 786 1500 784L1503 783L1499 788L1503 793L1507 790Q1507 796 1500 799L1488 810Q1483 809 1484 805Z" fill="#6894e0"/>
<circle cx="1487" cy="838" r="4.500" fill="#6a93e0"/><circle cx="1503" cy="838" r="2.500" fill="#6a93e0"/><circle cx="1487" cy="854" r="2.500" fill="#6a93e0"/><circle cx="1503" cy="855" r="3.500" fill="#6a93e0"/><path d="M1487 838H1503M1487 838V854M1487 838L1503 855" stroke="#5a80c8" stroke-width="1.500"/>
<circle cx="1494" cy="893" r="5" fill="#6a93e0"/><circle cx="1503" cy="885" r="3.400" fill="#5a80c8"/><path d="M1504 899Q1498 908 1490 905Q1481 901 1484 891Q1487 883 1497 883" fill="none" stroke="#5175bd" stroke-width="1.800"/>
<path d="M1484 945Q1484 938 1490 936L1503 929Q1508 930 1505 938L1500 947Q1496 954 1489 952Q1484 950 1484 945Z" fill="none" stroke="#5a80c8" stroke-width="1.800"/><circle cx="1491" cy="945" r="4.500" fill="none" stroke="#6a93e0" stroke-width="1.800"/><circle cx="1491" cy="945" r="1.600" fill="#6a93e0"/>
<path d="M1485 982H1502L1494 998Z" fill="none" stroke="#05b38a" stroke-width="2.200"/><g fill="#1d1d1d" stroke="#05b38a" stroke-width="1.800"><rect x="1483" y="979.500" width="5" height="5"/><rect x="1500" y="979.500" width="5" height="5"/><rect x="1491.500" y="996" width="5" height="5"/></g>
<circle cx="1494" cy="1036" r="12" fill="#b5525a"/><path d="M1495 1035V1027Q1504 1028 1504 1035Z" fill="#2a2325"/><path d="M1494 1036V1047Q1486 1046 1484 1040Z" fill="#161213"/>
</g>
</svg>
<script>document.querySelectorAll('text[textLength]').forEach(function(t){t.setAttribute('lengthAdjust','spacingAndGlyphs')});</script>
</body></html>
